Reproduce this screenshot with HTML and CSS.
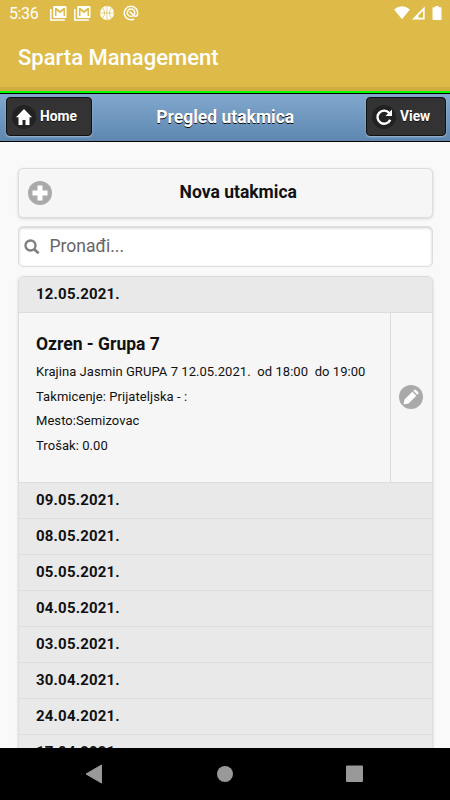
FILE: index.html
```
<!DOCTYPE html>
<html lang="bs">
<head>
<meta charset="utf-8">
<title>Sparta Management</title>
<link rel="stylesheet" href="styles.css">
</head>
<body>
<div class="phone">
  <header class="top">
    <div class="status">
      <span class="clock">5:36</span>
      <svg class="mail" width="18" height="15" viewBox="0 0 18 15"><path d="M.8 3v11h14" fill="none" stroke="#fff" stroke-width="1.500"/><path fill="#fff" fill-rule="evenodd" d="M4.500 0h10.700Q16.500 0 16.500 1.200v9.600Q16.500 12 15.200 12H4.500Q3.200 12 3.200 10.800V1.200Q3.200 0 4.500 0zM5 2v8h1.500V4.500L10 7.200l3.500-2.700V10H15V2h-1.500L10 4.800 6.500 2z"/></svg>
      <svg class="mail" width="18" height="15" viewBox="0 0 18 15"><path d="M.8 3v11h14" fill="none" stroke="#fff" stroke-width="1.500"/><path fill="#fff" fill-rule="evenodd" d="M4.500 0h10.700Q16.500 0 16.500 1.200v9.600Q16.500 12 15.200 12H4.500Q3.200 12 3.200 10.800V1.200Q3.200 0 4.500 0zM5 2v8h1.500V4.500L10 7.200l3.500-2.700V10H15V2h-1.500L10 4.800 6.500 2z"/></svg>
      <svg class="ball" width="14" height="14" viewBox="0 0 14 14"><circle cx="7" cy="7" r="7" fill="#fff"/><path d="M7 0v14M0 7h14M2.500 1.800q4.200 5.200 0 10.400M11.500 1.800q-4.200 5.200 0 10.400" fill="none" stroke="#debb49" stroke-width=".7"/></svg>
      <svg class="at" width="16" height="16" viewBox="0 0 16 16"><path d="M11 14A6.700 6.700 0 1 1 14.500 9.500Q13.500 12.300 11.200 10.800" fill="none" stroke="#fff" stroke-width="1.500"/><circle cx="8" cy="7.700" r="3.700" fill="none" stroke="#fff" stroke-width="1.500"/><path d="M6.500 6.500l4.700 4.300" stroke="#fff" stroke-width="1.400"/></svg>
      <span class="spacer"></span>
      <svg width="48" height="15" viewBox="0 0 48 15"><path d="M0 3.500Q7.900-2.800 15.900 3.500L8 13.300z" fill="#fff"/><path d="M30.700.5v13H18z" fill="#fff"/><path d="M29 5v6.800h-4.500V9.200z" fill="#debb49"/><path d="M41.200 0h3.600v1.200h1.800q.9 0 .9.900v11q0 .9-.9.900h-7.200q-.9 0-.9-.9v-11q0-.9.900-.9h1.800z" fill="#fff"/></svg>
    </div>
    <h1 class="app-title">Sparta Management</h1>
  </header>
  <nav class="bar">
    <a class="btn home"><span class="disc"><svg width="18" height="18" viewBox="0 0 18 18"><path d="M9 1L1 9.300h2.500V17h4v-5h3v5h4V9.300H17z" fill="#fff"/></svg></span><span class="label">Home</span></a>
    <h2 class="page-title">Pregled utakmica</h2>
    <a class="btn view"><span class="disc"><svg width="18" height="18" viewBox="0 0 18 18"><path d="M14.200 5A6.600 6.600 0 1 0 15.200 11.700" fill="none" stroke="#fff" stroke-width="2.400"/><path d="M17 1.500V8h-6.500z" fill="#fff"/></svg></span><span class="label">View</span></a>
  </nav>
  <main class="content">
    <a class="new"><svg width="24" height="24" viewBox="0 0 24 24"><circle cx="12" cy="12" r="12" fill="#aaa"/><path d="M12 4.500v15M4.500 12h15" stroke="#fff" stroke-width="5"/></svg><span>Nova utakmica</span></a>
    <div class="search"><svg width="16" height="16" viewBox="0 0 16 16"><circle cx="6.500" cy="6.500" r="5" fill="none" stroke="#808080" stroke-width="2.400"/><path d="M10 10l4.600 4.200" stroke="#808080" stroke-width="2.800"/></svg><span>Pronađi...</span></div>
    <ul class="list">
      <li class="date">12.05.2021.</li>
      <li class="match">
        <div class="info">
          <h3>Ozren - Grupa 7</h3>
          <p>Krajina Jasmin GRUPA 7 12.05.2021.&nbsp; od 18:00&nbsp; do 19:00</p>
          <p>Takmicenje: Prijateljska - :</p>
          <p>Mesto:Semizovac</p>
          <p>Trošak: 0.00</p>
        </div>
        <a class="edit"><svg width="24" height="24" viewBox="0 0 24 24"><circle cx="12" cy="12" r="12" fill="#aaa"/><path d="M4.500 19.500l1-5L13.300 6.700l4 4L9.500 18.500zM14.300 5.700l1-1q.7-.5 1.400 0l2.600 2.600q.5.700 0 1.400l-1 1z" fill="#fff"/></svg></a>
      </li>
      <li class="date">09.05.2021.</li>
      <li class="date">08.05.2021.</li>
      <li class="date">05.05.2021.</li>
      <li class="date">04.05.2021.</li>
      <li class="date">03.05.2021.</li>
      <li class="date">30.04.2021.</li>
      <li class="date">24.04.2021.</li>
      <li class="date">17.04.2021.</li>
    </ul>
  </main>
  <footer class="nav">
    <svg width="450" height="52" viewBox="0 0 450 52"><path d="M101.500 17v18L86 26z" fill="#999" stroke="#999" stroke-linejoin="round"/><circle cx="225" cy="26" r="8" fill="#999"/><rect x="346" y="17.500" width="17" height="16.500" rx="1" fill="#999"/></svg>
  </footer>
</div>
</body>
</html>
```
FILE: styles.css
```
* { box-sizing: border-box; }
body { margin: 0; font-family: Roboto, sans-serif; color: #111; }
h1, h2, h3, p, ul { margin: 0; padding: 0; }
svg { display: block; flex: none; }
.phone { width: 450px; height: 800px; overflow: hidden; display: flex; flex-direction: column; background: #f9f9f9; }
.top { height: 91px; flex: none; background: linear-gradient(#debb49 87px, #d3ab43 87px); }
.status { display: flex; height: 28px; padding: 6px 8px 0 9px; }
.clock { width: 41px; font-size: 16px; line-height: 16px; color: #fff; letter-spacing: -.4px; }
.mail { margin-right: 6px; }
.ball { margin: 0 9px 0 2px; }
.at { margin-top: -1px; }
.spacer { flex: 1; }
.app-title { padding: 16px 18px 0; font-size: 22px; line-height: 28px; font-weight: 500; color: #fff; }
.bar { height: 51px; flex: none; display: flex; align-items: flex-start; justify-content: space-between; padding: 4px 4.500px 0 5.500px; border-top: 2px solid #0f0; border-bottom: 1px solid #000; background: linear-gradient(#000 1px, #81a8ce 1px, #5e87b0) padding-box; }
.btn { height: 39px; display: flex; align-items: center; gap: 4.500px; padding: 0 0 0 5px; border: 1px solid #111; border-radius: 4px; background: #333; color: #fff; font-size: 13.800px; font-weight: 700; text-shadow: 0 1px 0 #111; box-shadow: 0 1px 2px rgba(255,255,255,.4); }
.label { padding-bottom: 2px; }
.home { width: 86.500px; }
.view { width: 80px; }
.disc { width: 24px; height: 24px; border-radius: 50%; background: #222; display: grid; place-items: center; }
.page-title { flex: 1; padding-right: 7px; text-align: center; font-size: 17.500px; line-height: 40px; font-weight: 700; color: #fff; text-shadow: 0 1px 0 #111; }
.content { flex: 1; min-height: 0; overflow: hidden; padding: 26px 17px 0 17.500px; }
.new { display: flex; align-items: center; height: 50px; padding-left: 8.500px; border: 1.500px solid #ddd; border-radius: 5px; background: #f6f6f6; box-shadow: 0 1px 3px rgba(0,0,0,.15); font-size: 17.500px; font-weight: 700; }
.new span { flex: 1; text-align: center; padding: 0 7px 2px 0; }
.new svg { margin-left: .5px; }
.search { display: flex; align-items: center; height: 41px; margin-top: 8px; padding: 0 0 2px 5px; gap: 10px; border: 1px solid #ddd; border-radius: 5px; background: #fff; box-shadow: inset 0 1px 3px rgba(0,0,0,.2); font-size: 17.500px; color: #666; }
.search svg { margin-top: 2px; }
.list { list-style: none; margin-top: 9px; border: 1px solid #ddd; border-radius: 5px 5px 0 0; box-shadow: 0 1px 3px rgba(0,0,0,.15); overflow: hidden; }
.date { height: 36px; padding-left: 17.500px; background: #e9e9e9; border-bottom: 1px solid #ddd; font-size: 15px; line-height: 35px; font-weight: 700; letter-spacing: .18px; }
.match { display: flex; height: 170px; border-bottom: 1px solid #ddd; background: #f6f6f6; }
.info { flex: 1; padding: 19px 0 0 17.500px; white-space: nowrap; }
.info h3 { font-size: 17.500px; line-height: 24px; margin-bottom: 4px; }
.info p { font-size: 13px; line-height: 24.600px; letter-spacing: .06px; }
.edit { width: 42.500px; border-left: 1.500px solid #ddd; display: grid; place-items: center; padding-bottom: 1px; }
.nav { height: 52px; flex: none; background: #000; }
```
